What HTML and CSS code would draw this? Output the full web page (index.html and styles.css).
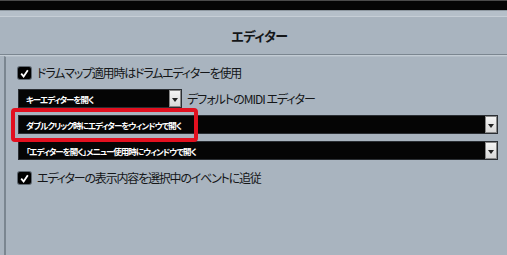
FILE: index.html
```html
<!doctype html>
<html lang="ja">
<head>
  <meta charset="utf-8" />
  <title>エディター</title>
  <link rel="stylesheet" href="styles.css">
</head>
<body>
  <div class="topbar"></div>
  <div class="subbar"></div>

  <header class="section-title">エディター</header>

  <div class="panel">
    <label class="check-row first">
      <span class="checkbox">
        <svg width="9" height="9" viewBox="0 0 9 9"><path d="M1.2 4.6 L3.6 7.4 L7.8 1.2" fill="none" stroke="#fff" stroke-width="1.8"/></svg>
      </span>
      <span class="text">ドラムマップ適用時はドラムエディターを使用</span>
    </label>

    <div class="select-row">
      <div class="select short">
        <span class="value">キーエディターを開く</span>
        <span class="arrow"></span>
      </div>
      <span class="text side">デフォルトのMIDI エディター</span>
    </div>

    <div class="select-row highlight-wrap">
      <div class="select">
        <span class="value">ダブルクリック時にエディターをウィンドウで開く</span>
        <span class="arrow"></span>
      </div>
      <div class="highlight"></div>
    </div>

    <div class="select-row">
      <div class="select">
        <span class="value">「エディターを開く」メニュー使用時にウィンドウで開く</span>
        <span class="arrow"></span>
      </div>
    </div>

    <label class="check-row">
      <span class="checkbox">
        <svg width="9" height="9" viewBox="0 0 9 9"><path d="M1.2 4.6 L3.6 7.4 L7.8 1.2" fill="none" stroke="#fff" stroke-width="1.8"/></svg>
      </span>
      <span class="text">エディターの表示内容を選択中のイベントに追従</span>
    </label>
  </div>
</body>
</html>
```

FILE: styles.css
```css
:root{
  --bg:#a9b4bf;
  --bg-light:#b3bdc7;
  --line-dark:#7b8690;
  --line-light:#c3ccd4;
  --ink:#141618;
  --red:#e2101f;
}
*{box-sizing:border-box}
html,body{height:100%}
body{
  margin:0;
  background:var(--bg);
  font-family:"Noto Sans CJK JP","Noto Sans",sans-serif;
  font-feature-settings:"palt";
  color:var(--ink);
  overflow:hidden;
}

.topbar{
  height:10px;
  background:#050505;
  border-top:1px solid #4a4a4a;
}
.subbar{
  height:7px;
  background:#b5bfc9;
  border-top:1px solid #8e98a1;
  border-bottom:1px solid #c6ced6;
}

.section-title{
  height:38px;
  display:flex;
  align-items:center;
  justify-content:center;
  padding-left:12px;
  font-size:13px;
  font-weight:700;
  letter-spacing:-0.5px;
  border-bottom:1px solid var(--line-dark);
  box-shadow:0 1px 0 var(--line-light);
}

.panel{
  margin:1px 0 0 4px;
  height:200px;
  border-left:2px solid var(--line-dark);
  border-top:1px solid var(--bg-light);
  padding:9px 9px 0 12px;
  display:flex;
  flex-direction:column;
}

.text{
  font-size:12px;
  letter-spacing:-1.2px;
  line-height:14px;
  white-space:nowrap;
}
.text.side{letter-spacing:-1px}

.check-row{
  display:flex;
  align-items:center;
  gap:6px;
  height:14px;
}
.check-row.first{margin-bottom:9px}
.check-row:last-child{margin-top:11px}

.checkbox{
  width:13px;
  height:12px;
  background:#000;
  border-radius:2px;
  box-shadow:0 0 0 1px #5e6770;
  display:flex;
  align-items:center;
  justify-content:center;
}

.select-row{
  display:flex;
  align-items:center;
  gap:5px;
  margin-top:7px;
}
.select-row:first-of-type{margin-top:0}
.highlight-wrap{position:relative}

.select{
  flex:1;
  height:19px;
  background:#050505;
  border:1px solid #2a2e33;
  display:flex;
  align-items:center;
  justify-content:space-between;
  padding-left:7px;
  color:#fff;
}
.select.short{flex:0 0 164px}
.select .value{
  font-size:8.5px;
  font-weight:700;
  letter-spacing:-1px;
  white-space:nowrap;
}
.select .arrow{
  width:12px;
  height:17px;
  background:linear-gradient(#f4f4f4,#d9d9d9);
  border:1px solid #888;
  position:relative;
}
.select .arrow::after{
  content:"";
  position:absolute;
  left:2px;
  top:7px;
  border-left:3.5px solid transparent;
  border-right:3.5px solid transparent;
  border-top:4px solid #222;
}

.highlight{
  position:absolute;
  left:-7px;
  top:-7px;
  width:187px;
  height:34px;
  border:4.5px solid var(--red);
  border-radius:4px;
}
```
